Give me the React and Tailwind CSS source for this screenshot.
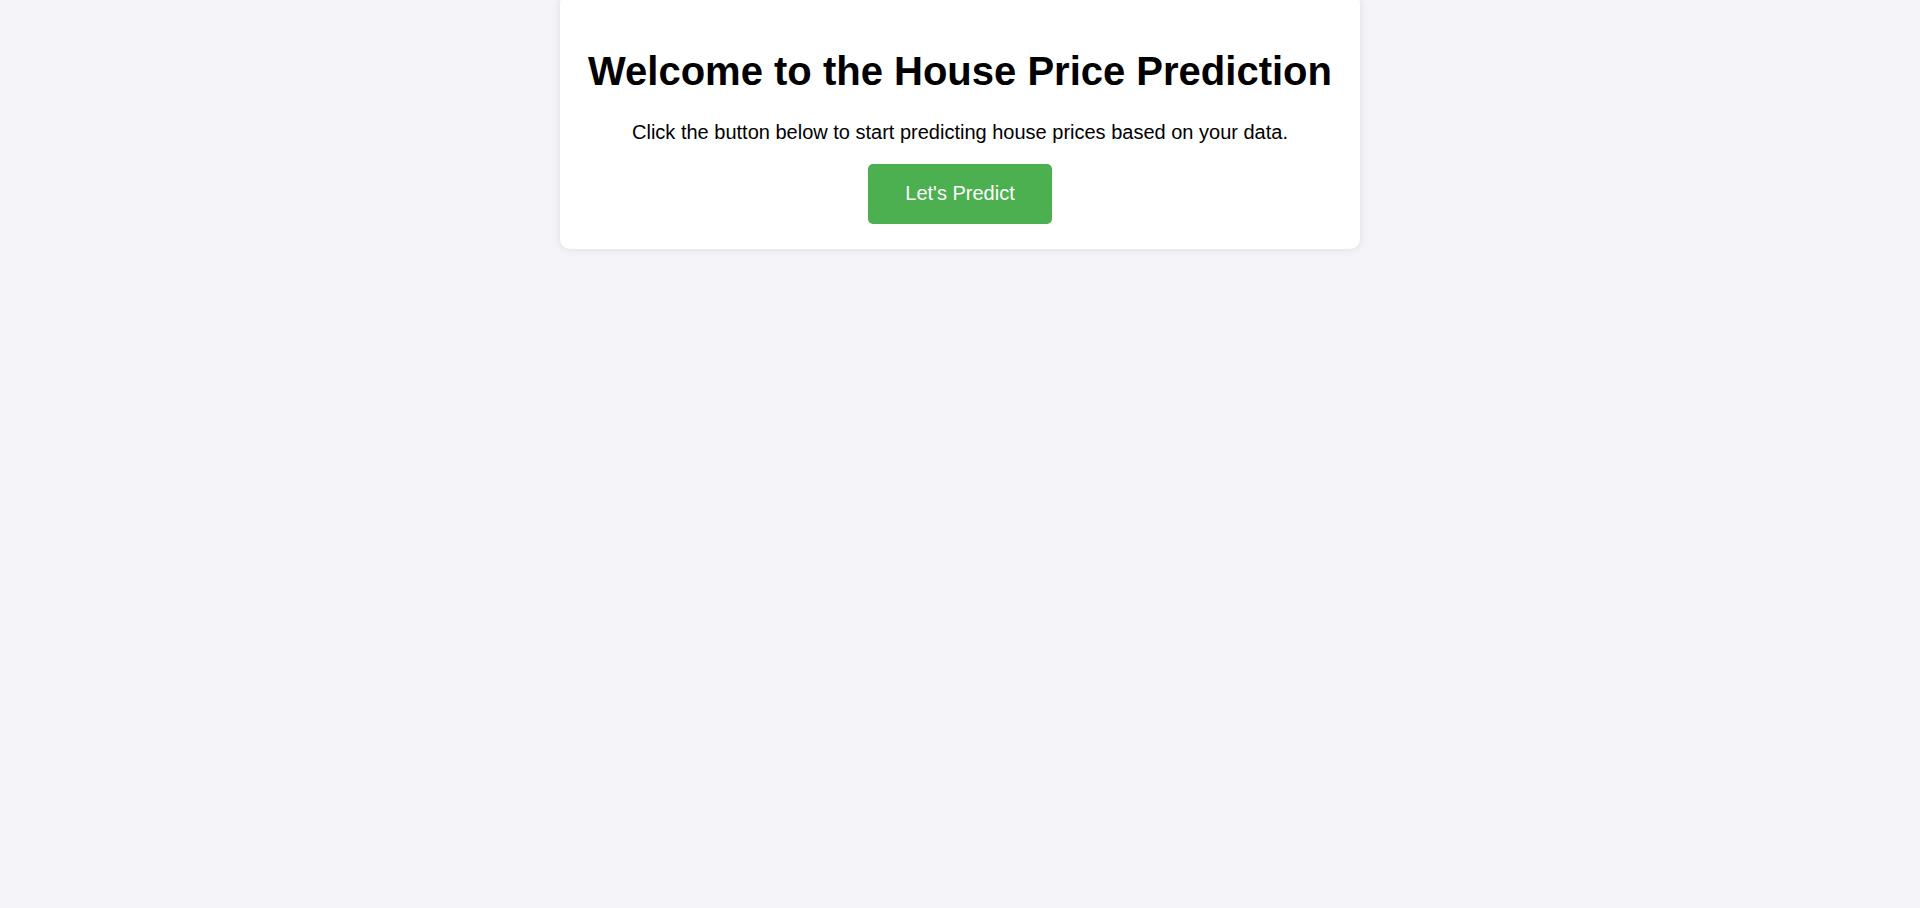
export default function App() {
  return (
    <div className="min-h-[908px] w-full bg-[#f4f4f9] flex justify-center" style={{ fontFamily: '"Liberation Sans", Arial, sans-serif' }}>
      <div className="w-[800px] h-[255px] -mt-[6px] bg-white rounded-[10px] shadow-[0_0_10px_rgba(0,0,0,0.1)] flex flex-col items-center pt-[26px]">
        <h1 className="text-[40px] leading-[46px] font-bold text-black mt-[28px]">Welcome to the House Price Prediction</h1>
        <p className="text-[20px] leading-[23px] text-black mt-[27px]">Click the button below to start predicting house prices based on your data.</p>
        <button className="mt-[20px] w-[184px] h-[60px] pb-[2px] bg-[#4caf50] text-white text-[20px] rounded-[5px]">Let's Predict</button>
      </div>
    </div>
  );
}
